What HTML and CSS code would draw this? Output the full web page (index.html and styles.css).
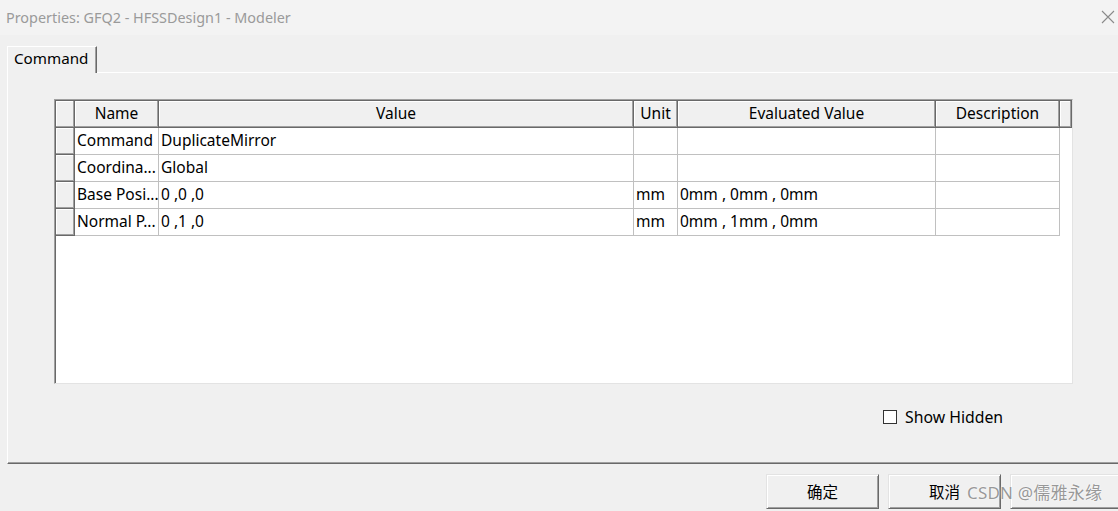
FILE: index.html
```html
<!DOCTYPE html>
<html>
<head>
<meta charset="utf-8">
<link rel="stylesheet" href="styles.css">
</head>
<body>
<div class="window">
  <div class="titlebar">
    <span class="title">Properties: GFQ2 - HFSSDesign1 - Modeler</span>
    <svg class="close" width="14" height="14" viewBox="0 0 14 14"><path d="M1 1 L13 13 M13 1 L1 13" stroke="#8a8a8a" stroke-width="1.1" fill="none"/></svg>
  </div>
  <div class="tabs">
    <div class="tab">Command</div>
  </div>
  <div class="panel">
    <div class="grid">
      <div class="row head">
        <div class="c c0 h"></div>
        <div class="c c1 h">Name</div>
        <div class="c c2 h">Value</div>
        <div class="c c3 h">Unit</div>
        <div class="c c4 h">Evaluated Value</div>
        <div class="c c5 h">Description</div>
        <div class="c c6 h"></div>
      </div>
      <div class="row">
        <div class="c c0 h"></div>
        <div class="c c1">Command</div>
        <div class="c c2">DuplicateMirror</div>
        <div class="c c3"></div>
        <div class="c c4"></div>
        <div class="c c5"></div>
      </div>
      <div class="row">
        <div class="c c0 h"></div>
        <div class="c c1">Coordina...</div>
        <div class="c c2">Global</div>
        <div class="c c3"></div>
        <div class="c c4"></div>
        <div class="c c5"></div>
      </div>
      <div class="row">
        <div class="c c0 h"></div>
        <div class="c c1">Base Posi...</div>
        <div class="c c2">0 ,0 ,0</div>
        <div class="c c3">mm</div>
        <div class="c c4">0mm , 0mm , 0mm</div>
        <div class="c c5"></div>
      </div>
      <div class="row">
        <div class="c c0 h"></div>
        <div class="c c1">Normal P...</div>
        <div class="c c2">0 ,1 ,0</div>
        <div class="c c3">mm</div>
        <div class="c c4">0mm , 1mm , 0mm</div>
        <div class="c c5"></div>
      </div>
    </div>
    <div class="options">
      <span class="check"></span>
      <span class="label">Show Hidden</span>
    </div>
  </div>
  <div class="footer">
    <div class="btn">确定</div>
    <div class="btn">取消</div>
    <div class="btn"></div>
  </div>
  <div class="watermark">CSDN @儒雅永缘</div>
</div>
</body>
</html>
```
FILE: styles.css
```css
html, body {
  margin: 0;
  padding: 0;
  background: #f0f0f0;
}
.window {
  position: relative;
  width: 1118px;
  height: 511px;
  overflow: hidden;
  font-family: "Noto Sans", "Open Sans", sans-serif;
  font-size: 15.5px;
  color: #000;
  background: #f0f0f0;
}
.titlebar {
  height: 35px;
  background: #f3f3f3;
  display: flex;
  align-items: center;
  justify-content: space-between;
  padding: 0 3px 0 6px;
}
.title {
  color: #9a9a9a;
  font-size: 14.4px;
}
.close {
  display: block;
  margin-top: -2px;
}
.tabs {
  display: flex;
  padding-left: 7px;
  margin-top: 11px;
}
.tab {
  position: relative;
  z-index: 1;
  height: 27px;
  box-sizing: border-box;
  width: 90px;
  padding-left: 6px;
  line-height: 22px;
  font-size: 15.2px;
  background: #f0f0f0;
  border-top: 1px solid #ffffff;
  border-left: 1px solid #ffffff;
  border-right: 1px solid #696969;
  box-shadow: inset -1px 0 #a0a0a0;
  margin-bottom: -1px;
}
.panel {
  margin-left: 7px;
  height: 392px;
  box-sizing: border-box;
  border-top: 1px solid #ffffff;
  border-left: 1px solid #ffffff;
  border-bottom: 1px solid #696969;
  box-shadow: inset 0 -1px #a0a0a0;
  padding: 26px 0 0 46px;
}
.grid {
  width: 1019px;
  height: 285px;
  box-sizing: border-box;
  background: #ffffff;
  border: 1px solid;
  border-color: #a0a0a0 #e3e3e3 #e3e3e3 #a0a0a0;
  box-shadow: inset 1px 1px #696969;
  padding: 1px 0 0 1px;
}
.row {
  display: flex;
  height: 27px;
}
.c {
  box-sizing: border-box;
  height: 27px;
  border-right: 1px solid #c0c0c0;
  border-bottom: 1px solid #c0c0c0;
  padding-left: 2px;
  line-height: 25px;
  white-space: nowrap;
  overflow: hidden;
}
.c.h {
  background: #f0f0f0;
  border-right: 1px solid #696969;
  border-bottom: 1px solid #696969;
  box-shadow: inset -1px -1px #a0a0a0, inset 1px 1px #ffffff;
}
.head .c {
  text-align: center;
  padding-left: 0;
}
.c0 { width: 19px; }
.c1 { width: 84px; }
.c2 { width: 475px; }
.c3 { width: 44px; }
.c4 { width: 258px; }
.c5 { width: 124px; }
.c6 { width: 12px; }
.options {
  display: flex;
  align-items: center;
  height: 20px;
  margin-top: 23px;
  padding-left: 829px;
  font-size: 15.8px;
}
.check {
  width: 14px;
  height: 14px;
  box-sizing: border-box;
  background: #fff;
  border: 1px solid #333;
  margin-right: 8px;
}
.footer {
  display: flex;
  gap: 9px;
  padding-left: 766px;
  margin-top: 10px;
}
.btn {
  flex: none;
  width: 113px;
  height: 35px;
  box-sizing: border-box;
  padding-bottom: 2px;
  background: #f0f0f0;
  border: 1px solid;
  border-color: #e3e3e3 #696969 #696969 #e3e3e3;
  box-shadow: inset 1px 1px #ffffff, inset -1px -1px #a0a0a0;
  display: flex;
  align-items: center;
  justify-content: center;
  font-family: "Noto Sans CJK SC", sans-serif;
  font-size: 15.5px;
}
.watermark {
  position: absolute;
  left: 967px;
  top: 479px;
  font-family: "Noto Sans", "Noto Sans CJK SC", sans-serif;
  font-size: 17px;
  color: rgba(120, 120, 120, 0.75);
  text-shadow: 0 0 2px #fff;
  letter-spacing: 0.2px;
}
```
